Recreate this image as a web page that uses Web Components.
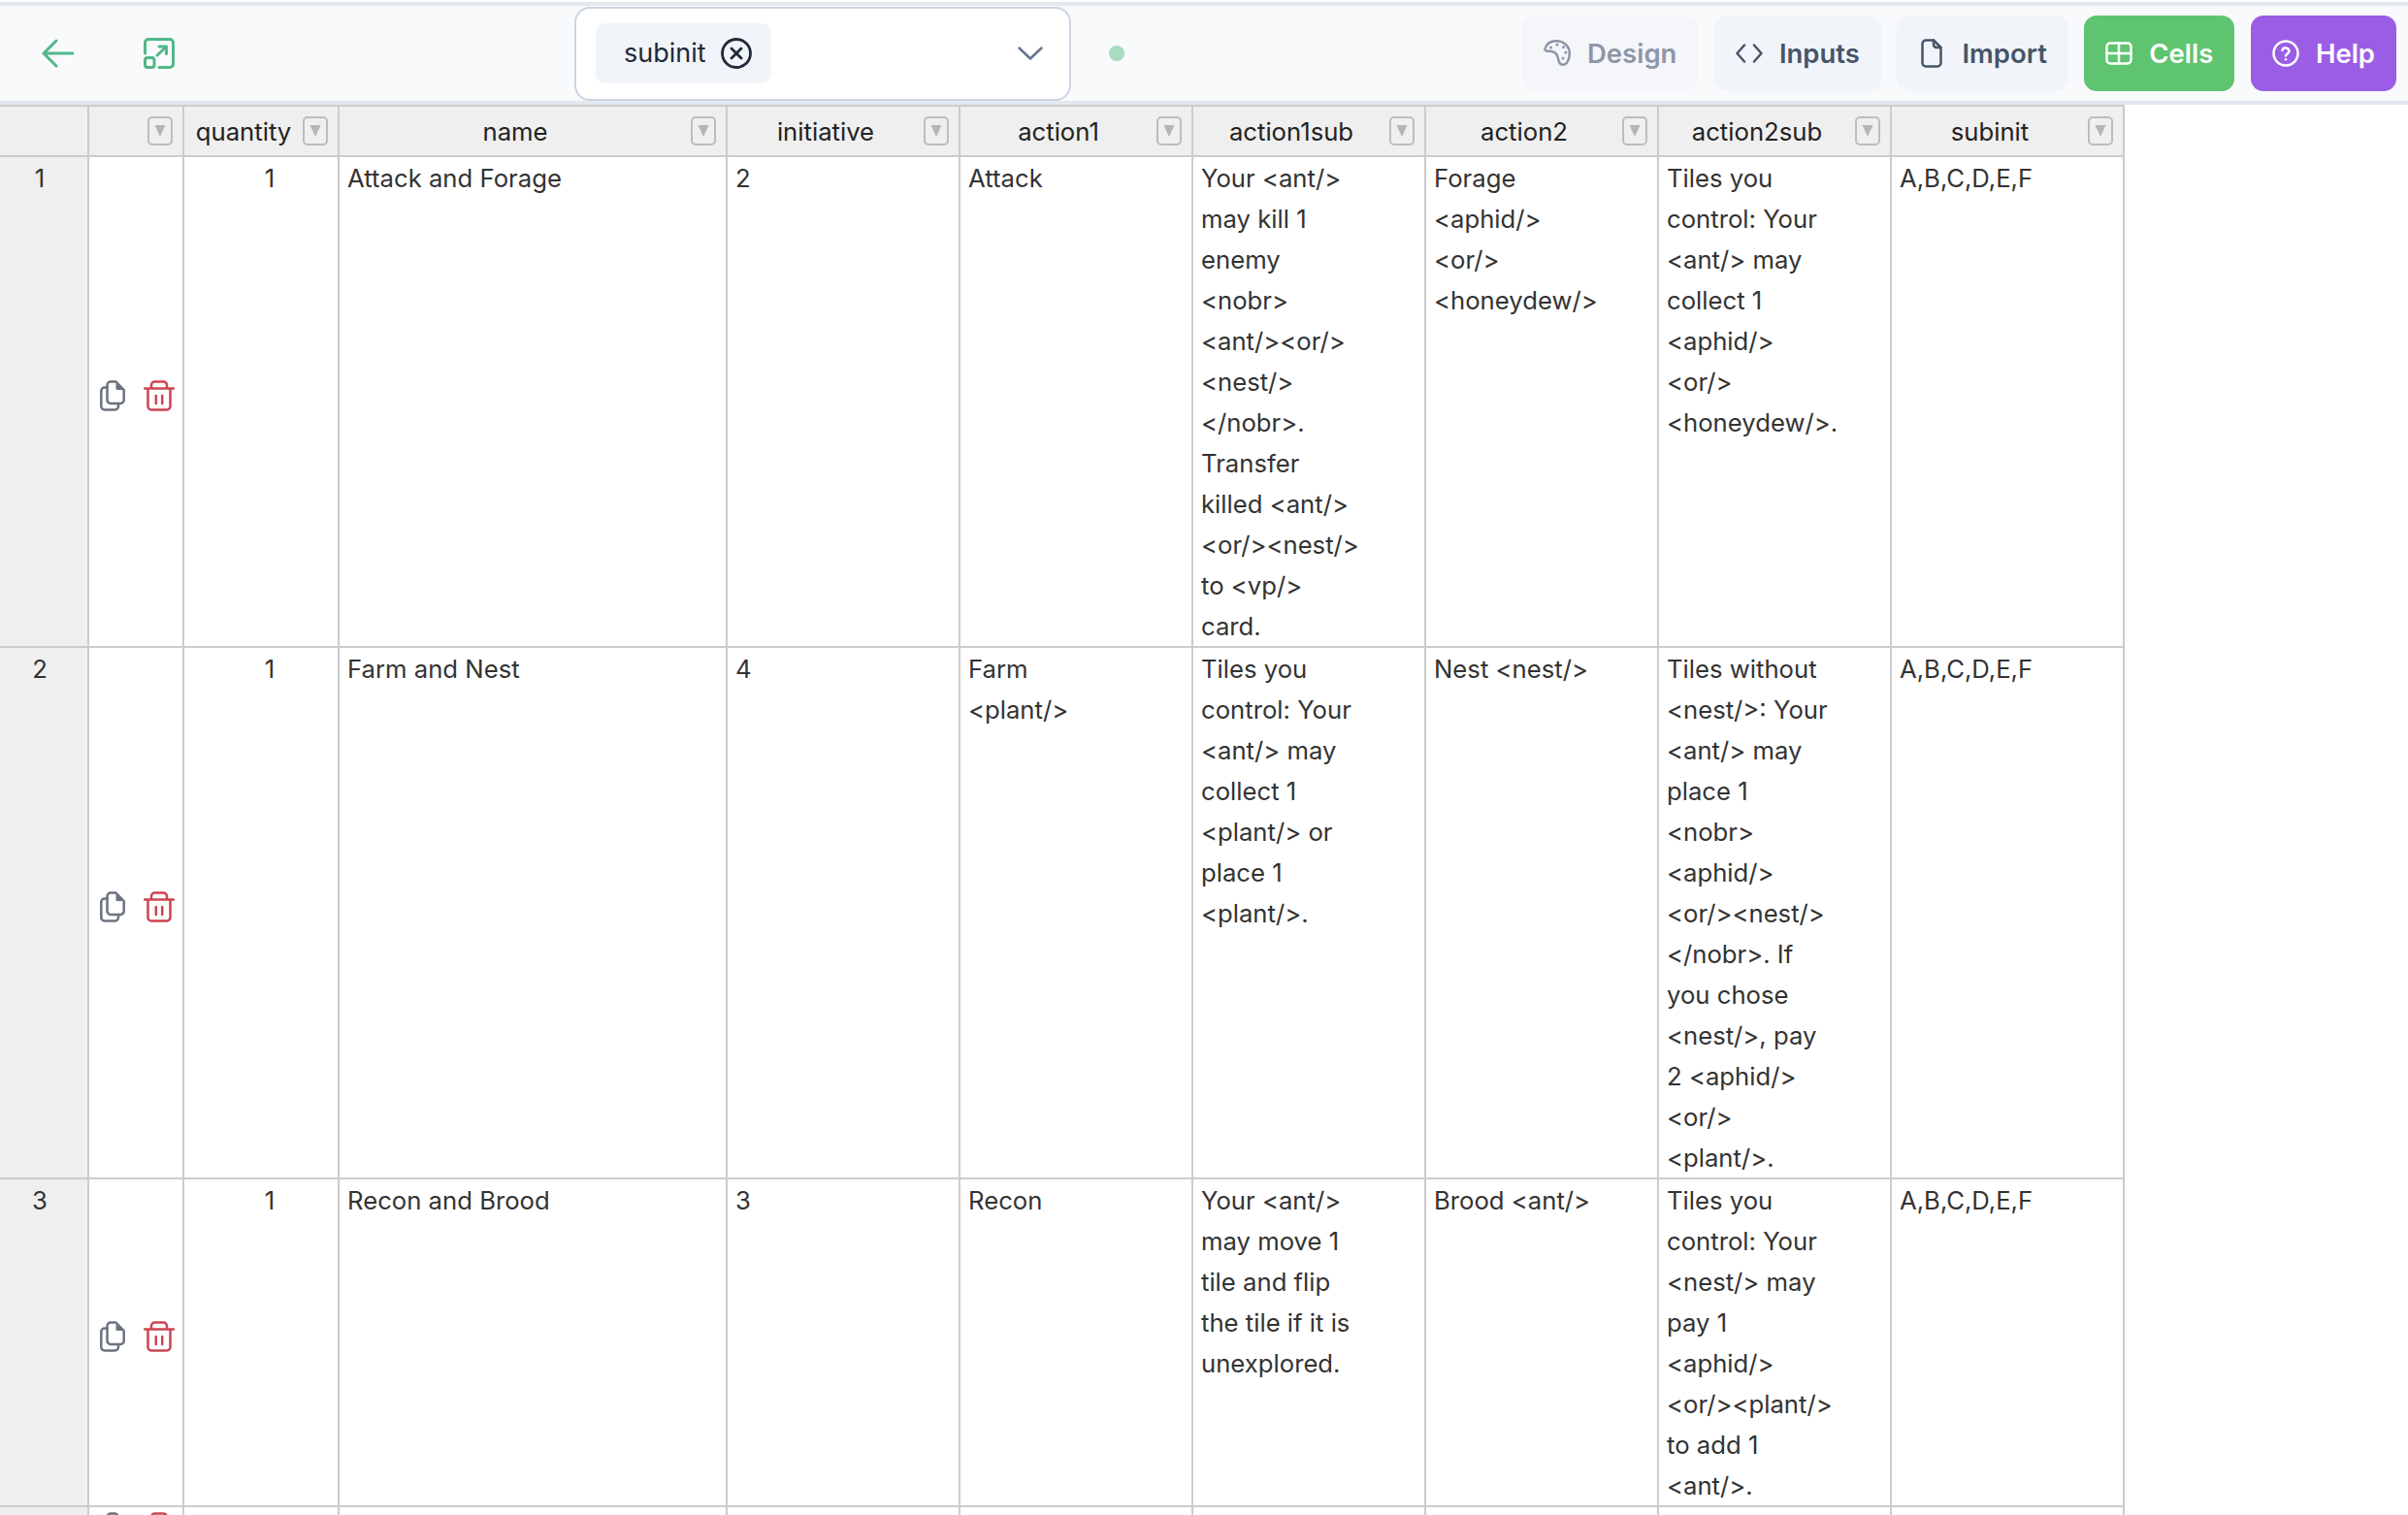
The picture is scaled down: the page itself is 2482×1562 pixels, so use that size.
<!DOCTYPE html>
<html>
<head>
<meta charset="utf-8">
<title>Cards</title>
<style>
  html, body { margin: 0; height: 100%; overflow: hidden; background: #fff; }
  body { font-family: Inter, "Liberation Sans", sans-serif; }
</style>
</head>
<body>
<app-shell>
  <top-bar slot="bar">
    <icon-link slot="left" kind="back"></icon-link>
    <icon-link slot="left" kind="expand"></icon-link>
    <tag-select slot="left" tag="subinit"></tag-select>
    <status-dot slot="left"></status-dot>
    <nav-button slot="right" icon="palette" tone="muted">Design</nav-button>
    <nav-button slot="right" icon="code">Inputs</nav-button>
    <nav-button slot="right" icon="file">Import</nav-button>
    <nav-button slot="right" icon="grid" tone="green">Cells</nav-button>
    <nav-button slot="right" icon="help" tone="purple">Help</nav-button>
  </top-bar>
  <sheet-head></sheet-head>
  <sheet-row index="1">
    <sheet-cell center>1</sheet-cell>
    <sheet-cell>Attack and Forage</sheet-cell>
    <sheet-cell>2</sheet-cell>
    <sheet-cell>Attack</sheet-cell>
    <sheet-cell>Your &lt;ant/&gt; may kill 1 enemy &lt;nobr&gt; &lt;ant/&gt;&lt;or/&gt; &lt;nest/&gt; &lt;/nobr&gt;. Transfer killed &lt;ant/&gt; &lt;or/&gt;&lt;nest/&gt; to &lt;vp/&gt; card.</sheet-cell>
    <sheet-cell>Forage &lt;aphid/&gt; &lt;or/&gt; &lt;honeydew/&gt;</sheet-cell>
    <sheet-cell>Tiles you control: Your &lt;ant/&gt; may collect 1 &lt;aphid/&gt; &lt;or/&gt; &lt;honeydew/&gt;.</sheet-cell>
    <sheet-cell>A,B,C,D,E,F</sheet-cell>
  </sheet-row>
  <sheet-row index="2">
    <sheet-cell center>1</sheet-cell>
    <sheet-cell>Farm and Nest</sheet-cell>
    <sheet-cell>4</sheet-cell>
    <sheet-cell>Farm &lt;plant/&gt;</sheet-cell>
    <sheet-cell>Tiles you control: Your &lt;ant/&gt; may collect 1 &lt;plant/&gt; or place 1 &lt;plant/&gt;.</sheet-cell>
    <sheet-cell>Nest &lt;nest/&gt;</sheet-cell>
    <sheet-cell>Tiles without &lt;nest/&gt;: Your &lt;ant/&gt; may place 1 &lt;nobr&gt; &lt;aphid/&gt; &lt;or/&gt;&lt;nest/&gt; &lt;/nobr&gt;. If you chose &lt;nest/&gt;, pay 2 &lt;aphid/&gt; &lt;or/&gt; &lt;plant/&gt;.</sheet-cell>
    <sheet-cell>A,B,C,D,E,F</sheet-cell>
  </sheet-row>
  <sheet-row index="3">
    <sheet-cell center>1</sheet-cell>
    <sheet-cell>Recon and Brood</sheet-cell>
    <sheet-cell>3</sheet-cell>
    <sheet-cell>Recon</sheet-cell>
    <sheet-cell>Your &lt;ant/&gt; may move 1 tile and flip the tile if it is unexplored.</sheet-cell>
    <sheet-cell>Brood &lt;ant/&gt;</sheet-cell>
    <sheet-cell style="--wrap-pad: 55px">Tiles you control: Your &lt;nest/&gt; may pay 1 &lt;aphid/&gt; &lt;or/&gt;&lt;plant/&gt; to add 1 &lt;ant/&gt;.</sheet-cell>
    <sheet-cell>A,B,C,D,E,F</sheet-cell>
  </sheet-row>
  <sheet-row style="--row-min: 54px">
    <sheet-cell></sheet-cell><sheet-cell></sheet-cell><sheet-cell></sheet-cell><sheet-cell></sheet-cell>
    <sheet-cell></sheet-cell><sheet-cell></sheet-cell><sheet-cell></sheet-cell><sheet-cell></sheet-cell>
  </sheet-row>
</app-shell>
<script>
  const COLS = '92px 98px 160px 400px 240px 240px 240px 240px 240px 240px';

  const ICONS = {
    back: '<svg viewBox="0 0 34 30" width="34" height="30"><path d="M2 15H32M15 2 2 15 15 28"/></svg>',
    expand: '<svg viewBox="0 0 32 32" width="32" height="32"><path d="M1.500 16V5a3.500 3.500 0 0 1 3.500-3.500H27a3.500 3.500 0 0 1 3.500 3.500V27a3.500 3.500 0 0 1-3.500 3.500H16"/><rect x="1.500" y="20.500" width="9.500" height="10" rx="2.500"/><path d="M14 18 23.500 9M16 9H23.500V16.500"/></svg>',
    palette: '<svg viewBox="0 0 28 28" width="28" height="28"><path d="M1.500 9.500C3 4 7.500 1.200 13 1.200 21 1.200 26.800 7 26.800 14 26.800 20.500 24 25.500 20.500 25.800 17.500 26 16 24 15.300 20.500 14.600 16 12.500 12.500 8.500 12 6 11.700 4 11.800 3 11.600 1.800 11.400 1.200 10.500 1.500 9.500Z"/><g class="dots"><circle cx="7.500" cy="8" r="1.500"/><circle cx="14" cy="5" r="1.500"/><circle cx="20.500" cy="7.500" r="1.500"/><circle cx="22.800" cy="13" r="1.500"/><circle cx="20" cy="19" r="1.500"/></g></svg>',
    code: '<svg viewBox="0 0 28 20" width="28" height="20"><path d="M9 1.500 1.500 10 9 18.500M19 1.500 26.500 10 19 18.500"/></svg>',
    file: '<svg viewBox="-3 0 28 30" width="28" height="30"><path d="M13 1.500H5A3.500 3.500 0 0 0 1.500 5V25A3.500 3.500 0 0 0 5 28.500H17A3.500 3.500 0 0 0 20.500 25V9Z"/><path d="M13 1.500V6A3 3 0 0 0 16 9H20.500"/></svg>',
    grid: '<svg viewBox="0 0 28 24" width="28" height="24"><rect x="1.500" y="1.500" width="25" height="21" rx="3.500"/><path d="M14 1.500V22.500M1.500 12H26.500"/></svg>',
    help: '<svg viewBox="0 0 28 28" width="28" height="28"><circle cx="14" cy="14" r="12.500"/><path d="M10.500 10.800a3.600 3.600 0 0 1 7 1c0 2.400-3.500 3-3.500 4.800"/><circle class="fill" cx="14" cy="20.300" r="1.300"/></svg>'
  };

  class AppShell extends HTMLElement {
    constructor() {
      super();
      this.attachShadow({ mode: 'open' }).innerHTML = `
        <style>
          :host { display: block; font-size: 25.700px; line-height: 42px; color: #333; }
        </style>
        <slot name="bar"></slot>
        <slot></slot>
      `;
    }
  }

  class TopBar extends HTMLElement {
    constructor() {
      super();
      this.attachShadow({ mode: 'open' }).innerHTML = `
        <style>
          :host {
            display: flex;
            align-items: center;
            justify-content: space-between;
            box-sizing: border-box;
            height: 106px;
            margin-top: 2px;
            background: #f8fafc;
            border-top: 4px solid #e5e9ef;
            border-bottom: 4px solid #e2e8f0;
            padding-right: 12px;
          }
          .left, .right { display: flex; align-items: center; }
          .right { gap: 16.500px; }
        </style>
        <div class="left"><slot name="left"></slot></div>
        <div class="right"><slot name="right"></slot></div>
      `;
    }
  }

  class IconLink extends HTMLElement {
    constructor() {
      super();
      const kind = this.getAttribute('kind');
      this.attachShadow({ mode: 'open' }).innerHTML = `
        <style>
          :host { display: flex; align-items: center; margin-left: ${kind === 'back' ? 43 : 71}px; }
          svg { display: block; fill: none; stroke: #52b788; stroke-width: 3; stroke-linecap: round; stroke-linejoin: round; }
        </style>
        ${ICONS[kind]}
      `;
    }
  }

  class TagSelect extends HTMLElement {
    constructor() {
      super();
      this.attachShadow({ mode: 'open' }).innerHTML = `
        <style>
          :host {
            display: flex;
            align-items: center;
            justify-content: space-between;
            box-sizing: border-box;
            width: 512px;
            height: 97px;
            margin-left: 412px;
            padding: 0 27px 0 20px;
            background: #fff;
            border: 2px solid #cbd5e1;
            border-radius: 16px;
          }
          .tag {
            display: flex;
            align-items: center;
            gap: 15px;
            height: 62px;
            padding: 0 20px 0 29px;
            background: #f1f5f9;
            border-radius: 10px;
            color: #1e293b;
            font-size: 27px;
          }
          svg { display: block; fill: none; stroke-linecap: round; stroke-linejoin: round; }
          .x { stroke: #1e293b; stroke-width: 2.800; }
          .chev { stroke: #64748b; stroke-width: 2.500; }
        </style>
        <div class="tag">
          <span>${this.getAttribute('tag')}</span>
          <svg class="x" viewBox="0 0 32 32" width="32" height="32"><circle cx="16" cy="16" r="14.500"/><path d="M11 11 21 21M21 11 11 21"/></svg>
        </div>
        <svg class="chev" viewBox="0 0 26 14" width="26" height="14"><path d="M1.500 1.500 13 12.500 24.500 1.500"/></svg>
      `;
    }
  }

  class StatusDot extends HTMLElement {
    constructor() {
      super();
      this.attachShadow({ mode: 'open' }).innerHTML = `
        <style>
          :host { display: block; width: 16px; height: 16px; margin-left: 39px; border-radius: 50%; background: #a7dcc0; }
        </style>
      `;
    }
  }

  class NavButton extends HTMLElement {
    constructor() {
      super();
      this.attachShadow({ mode: 'open' }).innerHTML = `
        <style>
          :host {
            display: flex;
            align-items: center;
            gap: 17px;
            box-sizing: border-box;
            height: 78px;
            padding: 0 22px;
            border-radius: 13px;
            font-size: 27.500px;
            font-weight: 600;
            background: #f1f5f9;
            color: #475569;
          }
          :host([tone="muted"]) { background: #f4f6fa; color: #8d96a7; }
          :host([tone="green"]) { background: #5fc46f; color: #fff; }
          :host([tone="purple"]) { background: #9b5de5; color: #fff; }
          svg { display: block; fill: none; stroke: currentColor; stroke-width: 2.500; stroke-linecap: round; stroke-linejoin: round; }
          svg .fill { fill: currentColor; stroke: none; }
          svg .dots { fill: currentColor; stroke: none; }
        </style>
        ${ICONS[this.getAttribute('icon')]}
        <slot></slot>
      `;
    }
  }

  class SheetHead extends HTMLElement {
    constructor() {
      super();
      const names = ['', 'quantity', 'name', 'initiative', 'action1', 'action1sub', 'action2', 'action2sub', 'subinit'];
      const cols = names.map((n) => `
        <div class="col">
          <span>${n}</span>
          <svg viewBox="0 0 26 30" width="26" height="30"><rect x="1" y="1" width="24" height="28" rx="4"/><path d="M7.500 9H18.500L13 21Z"/></svg>
        </div>`).join('');
      this.attachShadow({ mode: 'open' }).innerHTML = `
        <style>
          :host {
            display: grid;
            grid-template-columns: ${COLS};
            width: max-content;
            height: 54px;
            box-sizing: border-box;
            background: #efefef;
            border-top: 2px solid #ccc;
            border-bottom: 2px solid #ccc;
            color: #222;
          }
          .corner, .col { border-right: 2px solid #ccc; }
          .col { display: flex; align-items: center; padding-right: 10px; }
          .col span { flex: 1; text-align: center; padding-top: 2px; }
          svg { display: block; flex: none; }
          rect { fill: #efefef; stroke: #bdbdbd; stroke-width: 2; }
          path { fill: #b5b5b5; }
        </style>
        <div class="corner"></div>
        ${cols}
      `;
    }
  }

  class SheetRow extends HTMLElement {
    constructor() {
      super();
      const index = this.getAttribute('index') || '';
      this.attachShadow({ mode: 'open' }).innerHTML = `
        <style>
          :host {
            display: grid;
            grid-template-columns: ${COLS};
            width: max-content;
            min-height: var(--row-min, 0);
            border-bottom: 2px solid #ccc;
          }
          .num { background: #efefef; border-right: 2px solid #ccc; padding: 1px 8px 0 0; text-align: center; color: #333; line-height: 41px; }
          .tools { display: flex; align-items: center; justify-content: center; gap: 19px; border-right: 2px solid #ccc; padding: 0 0 12px 3px; }
          svg { display: block; fill: none; stroke-width: 2.500; stroke-linecap: round; stroke-linejoin: round; }
          .copy { stroke: #6b7280; }
          .copy .tip { fill: #6b7280; stroke: none; }
          .trash { stroke: #cb4451; }
        </style>
        <div class="num">${index}</div>
        <div class="tools">
          <svg class="copy" viewBox="0 0 26 32" width="26" height="32">
            <path d="M11 1.500H16.500L24.700 10V20.500A3.500 3.500 0 0 1 21.200 24H11A3.500 3.500 0 0 1 7.500 20.500V5A3.500 3.500 0 0 1 11 1.500Z"/>
            <path class="tip" d="M16.500 3V8.500A1.500 1.500 0 0 0 18 10H24Z"/>
            <path d="M7.500 7.500H4.800A3.500 3.500 0 0 0 1.300 11V27A3.500 3.500 0 0 0 4.800 30.500H15.500A3.500 3.500 0 0 0 19 27V24"/>
          </svg>
          <svg class="trash" viewBox="0 0 32 32" width="32" height="32">
            <path d="M1 8.500H31M8 8.500V5A3.500 3.500 0 0 1 11.500 1.500H20.500A3.500 3.500 0 0 1 24 5V8.500M4.500 8.500V27A3.500 3.500 0 0 0 8 30.500H24A3.500 3.500 0 0 0 27.500 27V8.500M12.800 16V24M19.200 16V24"/>
          </svg>
        </div>
        <slot></slot>
      `;
    }
  }

  class SheetCell extends HTMLElement {
    constructor() {
      super();
      this.attachShadow({ mode: 'open' }).innerHTML = `
        <style>
          /* the wrap width of the text is narrower than the column */
          :host { display: block; box-sizing: border-box; padding: 1px var(--wrap-pad, 60px) 0 8px; border-right: 2px solid #ccc; color: #333; min-width: 0; }
          :host([center]) { text-align: center; padding: 1px 8px 0 26px; }
          .body { margin-bottom: -1px; }
        </style>
        <div class="body"><slot></slot></div>
      `;
    }
  }

  customElements.define('app-shell', AppShell);
  customElements.define('top-bar', TopBar);
  customElements.define('icon-link', IconLink);
  customElements.define('tag-select', TagSelect);
  customElements.define('status-dot', StatusDot);
  customElements.define('nav-button', NavButton);
  customElements.define('sheet-head', SheetHead);
  customElements.define('sheet-row', SheetRow);
  customElements.define('sheet-cell', SheetCell);
</script>
</body>
</html>
